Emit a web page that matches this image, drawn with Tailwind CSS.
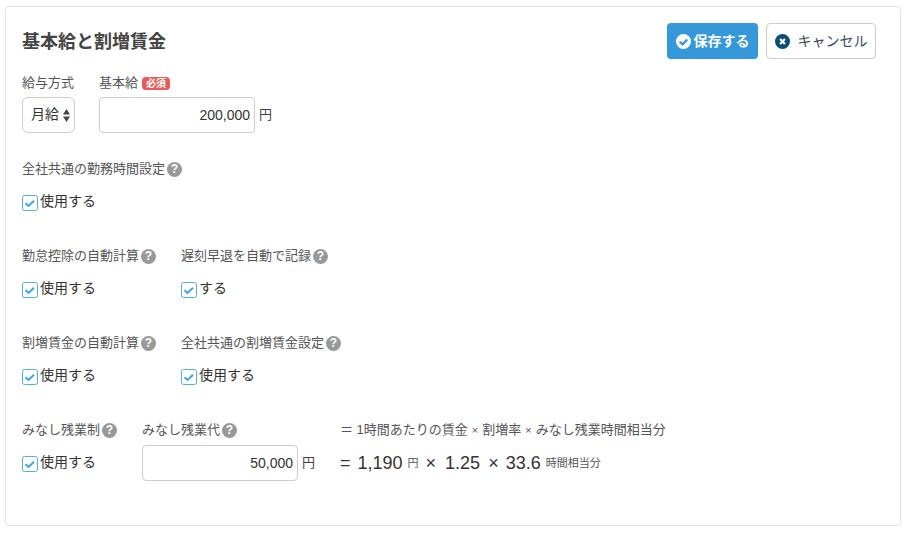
<!DOCTYPE html>
<html lang="ja">
<head>
    <meta charset="UTF-8">
    <title>基本給と割増賃金</title>
    <script src="https://cdn.jsdelivr.net/npm/@tailwindcss/browser@4"></script>
</head>
<body class="bg-white font-['Liberation_Sans','Noto_Sans_CJK_JP',sans-serif] text-[#333] antialiased">
    <div class="w-[906px] h-[535px] pt-[6px] pl-[5px]">
        <div class="w-[896px] h-[520px] bg-white border border-[#e3e3e3] rounded pt-4 pl-4 pr-6">
            <div class="flex items-center justify-between mb-[14px]">
                <h1 class="pt-[2px] text-[18px] font-bold text-[#444]">基本給と割増賃金</h1>
                <div class="flex gap-2">
                    <button class="flex items-center justify-center w-[91px] h-9 bg-[#3498db] rounded text-white text-[14px] font-bold gap-[3px]">
                        <svg class="w-[15px] h-[15px]" viewBox="0 0 16 16"><circle cx="8" cy="8" r="8" fill="#fff"/><path d="M4 8.2l2.9 2.8L12 5.8" fill="none" stroke="#3498db" stroke-width="2.4"/></svg>
                        保存する
                    </button>
                    <button class="flex items-center justify-center w-[110px] h-9 bg-white border border-[#ccc] rounded text-[#34495e] text-[14px] gap-2">
                        <svg class="w-[15px] h-[15px]" viewBox="0 0 16 16"><circle cx="8" cy="8" r="8" fill="#0f4c75"/><path d="M5.4 5.4l5.2 5.2M10.6 5.4l-5.2 5.2" fill="none" stroke="#fff" stroke-width="2.4"/></svg>
                        キャンセル
                    </button>
                </div>
            </div>

            <div class="flex flex-col gap-[26px]">
                <div class="flex gap-6">
                    <div>
                        <div class="h-5 mb-1 text-[13px] leading-5 text-[#555]">給与方式</div>
                        <div class="flex items-center justify-between w-[53px] h-9 pl-2 pr-1 border border-[#ccc] rounded-md text-[14px]">
                            <span class="-mt-[2px]">月給</span>
                            <svg class="w-[7px] h-[13px]" viewBox="0 0 7 13"><path d="M3.5 0L7 5.4H0zM3.5 13L0 7.6h7z" fill="#444"/></svg>
                        </div>
                    </div>
                    <div>
                        <div class="flex items-center gap-1 h-5 mb-1 text-[13px] text-[#555]">
                            基本給
                            <span class="flex items-center justify-center w-[28px] h-[13px] bg-[#e9595a] rounded-sm text-white text-[10px] font-bold">必須</span>
                        </div>
                        <div class="flex items-center gap-1">
                            <div class="w-[156px] h-9 px-1 border border-[#ccc] rounded text-right text-[14px] leading-[34px]">200,000</div>
                            <span class="text-[13px] text-[#444]">円</span>
                        </div>
                    </div>
                </div>

                <div>
                    <div class="flex items-center gap-[2px] h-5 mb-[5px] text-[13px] text-[#555]">
                        全社共通の勤務時間設定
                        <span class="flex items-center justify-center w-[15px] h-[15px] rounded-full bg-[#999] text-white text-[12px] font-bold">?</span>
                    </div>
                    <div class="flex items-center gap-[2px] h-9 text-[14px]">
                        <svg class="w-4 h-4 mt-[2px]" viewBox="0 0 16 16"><rect x=".5" y=".5" width="15" height="15" rx="2" fill="#fff" stroke="#4fb0e6"/><path d="M3.5 8.2l3 2.8 5.5-5.2" fill="none" stroke="#3da5e0" stroke-width="2"/></svg>
                        <span class="-mt-[2px]">使用する</span>
                    </div>
                </div>

                <div class="flex">
                    <div class="w-[159px]">
                        <div class="flex items-center gap-[2px] h-5 mb-[5px] text-[13px] text-[#555]">
                            勤怠控除の自動計算
                            <span class="flex items-center justify-center w-[15px] h-[15px] rounded-full bg-[#999] text-white text-[12px] font-bold">?</span>
                        </div>
                        <div class="flex items-center gap-[2px] h-9 text-[14px]">
                            <svg class="w-4 h-4 mt-[2px]" viewBox="0 0 16 16"><rect x=".5" y=".5" width="15" height="15" rx="2" fill="#fff" stroke="#4fb0e6"/><path d="M3.5 8.2l3 2.8 5.5-5.2" fill="none" stroke="#3da5e0" stroke-width="2"/></svg>
                            <span class="-mt-[2px]">使用する</span>
                        </div>
                    </div>
                    <div>
                        <div class="flex items-center gap-[2px] h-5 mb-[5px] text-[13px] text-[#555]">
                            遅刻早退を自動で記録
                            <span class="flex items-center justify-center w-[15px] h-[15px] rounded-full bg-[#999] text-white text-[12px] font-bold">?</span>
                        </div>
                        <div class="flex items-center gap-[2px] h-9 text-[14px]">
                            <svg class="w-4 h-4 mt-[2px]" viewBox="0 0 16 16"><rect x=".5" y=".5" width="15" height="15" rx="2" fill="#fff" stroke="#4fb0e6"/><path d="M3.5 8.2l3 2.8 5.5-5.2" fill="none" stroke="#3da5e0" stroke-width="2"/></svg>
                            <span class="-mt-[2px]">する</span>
                        </div>
                    </div>
                </div>

                <div class="flex">
                    <div class="w-[159px]">
                        <div class="flex items-center gap-[2px] h-5 mb-[5px] text-[13px] text-[#555]">
                            割増賃金の自動計算
                            <span class="flex items-center justify-center w-[15px] h-[15px] rounded-full bg-[#999] text-white text-[12px] font-bold">?</span>
                        </div>
                        <div class="flex items-center gap-[2px] h-9 text-[14px]">
                            <svg class="w-4 h-4 mt-[2px]" viewBox="0 0 16 16"><rect x=".5" y=".5" width="15" height="15" rx="2" fill="#fff" stroke="#4fb0e6"/><path d="M3.5 8.2l3 2.8 5.5-5.2" fill="none" stroke="#3da5e0" stroke-width="2"/></svg>
                            <span class="-mt-[2px]">使用する</span>
                        </div>
                    </div>
                    <div>
                        <div class="flex items-center gap-[2px] h-5 mb-[5px] text-[13px] text-[#555]">
                            全社共通の割増賃金設定
                            <span class="flex items-center justify-center w-[15px] h-[15px] rounded-full bg-[#999] text-white text-[12px] font-bold">?</span>
                        </div>
                        <div class="flex items-center gap-[2px] h-9 text-[14px]">
                            <svg class="w-4 h-4 mt-[2px]" viewBox="0 0 16 16"><rect x=".5" y=".5" width="15" height="15" rx="2" fill="#fff" stroke="#4fb0e6"/><path d="M3.5 8.2l3 2.8 5.5-5.2" fill="none" stroke="#3da5e0" stroke-width="2"/></svg>
                            <span class="-mt-[2px]">使用する</span>
                        </div>
                    </div>
                </div>

                <div class="flex">
                    <div class="w-[120px]">
                        <div class="flex items-center gap-[2px] h-5 mb-[5px] text-[13px] text-[#555]">
                            みなし残業制
                            <span class="flex items-center justify-center w-[15px] h-[15px] rounded-full bg-[#999] text-white text-[12px] font-bold">?</span>
                        </div>
                        <div class="flex items-center gap-[2px] h-9 text-[14px]">
                            <svg class="w-4 h-4 mt-[2px]" viewBox="0 0 16 16"><rect x=".5" y=".5" width="15" height="15" rx="2" fill="#fff" stroke="#4fb0e6"/><path d="M3.5 8.2l3 2.8 5.5-5.2" fill="none" stroke="#3da5e0" stroke-width="2"/></svg>
                            <span class="-mt-[2px]">使用する</span>
                        </div>
                    </div>
                    <div class="w-[198px]">
                        <div class="flex items-center gap-[2px] h-5 mb-[5px] text-[13px] text-[#555]">
                            みなし残業代
                            <span class="flex items-center justify-center w-[15px] h-[15px] rounded-full bg-[#999] text-white text-[12px] font-bold">?</span>
                        </div>
                        <div class="flex items-center gap-1">
                            <div class="w-[156px] h-9 px-1 border border-[#ccc] rounded text-right text-[14px] leading-[34px]">50,000</div>
                            <span class="text-[13px] text-[#444]">円</span>
                        </div>
                    </div>
                    <div>
                        <div class="flex items-center h-5 mb-[5px] text-[13px] text-[#555]">
                            ＝ 1時間あたりの賃金<span class="mx-1 text-[11px]">×</span>割増率<span class="mx-1 text-[11px]">×</span>みなし残業時間相当分
                        </div>
                        <div class="flex items-center h-9 text-[18px] text-[#333]">
                            <span class="mr-[7px]">=</span>1,190<span class="ml-[5px] mr-[7px] text-[11px] text-[#555]">円</span><span class="mr-[9px]">×</span>1.25<span class="ml-2 mr-[7px]">×</span>33.6<span class="ml-[5px] text-[11px] text-[#555]">時間相当分</span>
                        </div>
                    </div>
                </div>
            </div>
        </div>
    </div>
</body>
</html>
